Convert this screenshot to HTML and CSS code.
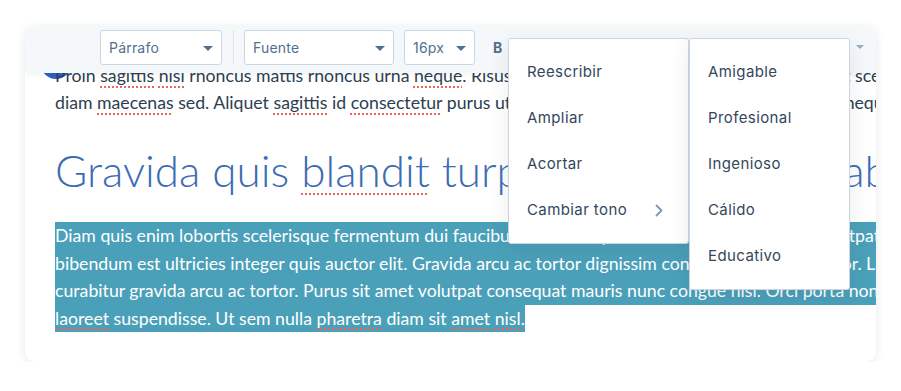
FILE: index.html
```html
<!DOCTYPE html>
<html lang="es">
<head>
<meta charset="utf-8">
<title>Editor</title>
<link rel="stylesheet" href="styles.css">
</head>
<body>
<div class="card">
  <div class="content">
    <span class="avatar"></span>
    <div class="line">Proin <span class="sp">sagittis</span> <span class="sp">nisl</span> rhoncus mattis rhoncus urna <span class="sp">neque</span>. Risus viverra adipiscing at in tellus integer feugiat scelerisque varius morbi enim nunc faucibus a pellentesque sit amet porttitor eget dolor morbi non arcu risus quis varius</div>
    <div class="line">diam <span class="sp">maecenas</span> sed. Aliquet <span class="sp">sagittis</span> id <span class="sp">consectetur</span> purus ut faucibus pulvinar elementum integer enim neque volutpat ac tincidunt vitae semper quis lectus nulla at volutpat diam ut venenatis</div>
    <h1 class="heading">Gravida quis <span class="sp">blandit</span> turpis cursus in hac habitasse</h1>
    <div class="sel">
      <div class="sel-line">Diam quis enim lobortis scelerisque fermentum dui faucibus in ornare quam viverra orci sagittis eu volutpat odio facilisis condimentum</div>
      <div class="sel-line">bibendum est ultricies integer quis auctor elit. Gravida arcu ac tortor dignissim convallis aenean et tortor. Lacus sed turpis tincidunt id aliquet</div>
      <div class="sel-line">curabitur gravida arcu ac tortor. Purus sit amet volutpat consequat mauris nunc congue nisl. Orci porta non pulvinar neque laoreet</div>
      <div class="sel-line last"><span class="sp">laoreet</span> suspendisse. Ut sem nulla <span class="sp">pharetra</span> diam sit <span class="sp">amet</span> <span class="sp">nisl</span>.</div>
    </div>
  </div>

  <div class="toolbar">
    <div class="select w-par"><span>Párrafo</span><span class="caret"></span></div>
    <div class="sep"></div>
    <div class="select w-font"><span>Fuente</span><span class="caret"></span></div>
    <div class="select w-size"><span>16px</span><span class="caret"></span></div>
    <span class="bold">B</span>
    <span class="caret light right-caret"></span>
  </div>

  <ul class="menu menu-main">
    <li>Reescribir</li>
    <li>Ampliar</li>
    <li>Acortar</li>
    <li class="sub">Cambiar tono
      <svg class="chev" width="8" height="13" viewBox="0 0 8 13"><path d="M1.5 1.5 L6.5 6.5 L1.5 11.5" fill="none" stroke="#7c98b6" stroke-width="1.8" stroke-linecap="round" stroke-linejoin="round"/></svg>
    </li>
  </ul>
  <ul class="menu menu-tone">
    <li>Amigable</li>
    <li>Profesional</li>
    <li>Ingenioso</li>
    <li>Cálido</li>
    <li>Educativo</li>
  </ul>
</div>
</body>
</html>
```

FILE: styles.css
```css
* { box-sizing: border-box; }
html, body { margin: 0; padding: 0; background: #ffffff; }
body { font-family: "Lato", "Liberation Sans", sans-serif; }

.card {
  position: relative;
  margin: 27px 0 0 25px;
  width: 851px;
  height: 335px;
  background: #ffffff;
  border-radius: 10px;
  overflow: hidden;
  box-shadow: 0 1px 10px rgba(45, 62, 80, 0.12);
}

.content {
  position: relative;
  padding: 35px 0 0 30px;
  color: #2d3e50;
  font-size: 17.7px;
}

.avatar {
  position: absolute;
  left: 16px;
  top: 23px;
  width: 30px;
  height: 29px;
  border-radius: 50%;
  background: #2f5ec9;
}

.line {
  position: relative;
  white-space: nowrap;
  line-height: 27px;
  height: 27px;
}

.sp {
  text-decoration: underline dotted #e6675c;
  text-decoration-thickness: 2px;
  text-underline-offset: 4px;
}

.heading {
  margin: 28px 0 0 0;
  font-weight: 300;
  font-size: 44px;
  line-height: 53px;
  color: #3b6cb4;
  white-space: nowrap;
}
.heading .sp { text-decoration-thickness: 2px; text-underline-offset: 6px; }

.sel { margin-top: 25px; }
.sel-line {
  background: #4aa0b9;
  color: #ffffff;
  white-space: nowrap;
  line-height: 27.5px;
  height: 27.5px;
}
.sel-line.last { width: fit-content; }

.toolbar {
  position: absolute;
  left: 0;
  top: 0;
  width: 100%;
  height: 46px;
  background: #f5f8fa;
  box-shadow: 0 2px 4px rgba(45, 62, 80, 0.06);
  display: flex;
  align-items: flex-start;
  padding: 3px 0 0 75px;
  font-family: "Inter", "Lato", sans-serif;
  font-size: 14px;
  letter-spacing: 0.2px;
  color: #516f90;
}

.select {
  height: 35px;
  background: #ffffff;
  border: 1px solid #cbd6e2;
  border-radius: 3px;
  display: flex;
  align-items: center;
  justify-content: space-between;
  padding: 0 8px 0 8px;
}
.w-par { width: 122px; }
.w-font { width: 150px; margin-left: 10px; }
.w-size { width: 71px; margin-left: 10px; }

.sep {
  width: 1px;
  height: 35px;
  background: #dfe3eb;
  margin-left: 11px;
}

.caret {
  width: 0;
  height: 0;
  border-left: 5px solid transparent;
  border-right: 5px solid transparent;
  border-top: 5px solid #516f90;
  margin-top: 1px;
}
.caret.light { border-top-color: #99afc4; border-left-width: 4px; border-right-width: 4px; border-top-width: 4px; }

.bold {
  font-weight: 700;
  margin-left: 18px;
  line-height: 35px;
}
.right-caret {
  position: absolute;
  left: 831px;
  top: 17px;
}

.menu {
  position: absolute;
  top: 11px;
  margin: 0;
  padding: 10px 0;
  list-style: none;
  background: #ffffff;
  border: 1px solid #cbd6e2;
  border-radius: 3px;
  box-shadow: 0 6px 20px rgba(45, 62, 80, 0.10);
  font-family: "Inter", "Lato", sans-serif;
  font-size: 15px;
  letter-spacing: 0.4px;
  color: #33475b;
}
.menu li {
  height: 46px;
  line-height: 46px;
  padding-left: 18px;
  padding-right: 25px;
  display: flex;
  align-items: center;
}
.menu-main { left: 483px; width: 181px; }
.menu-tone { left: 664px; width: 161px; }
.chev { margin-left: auto; }
```
